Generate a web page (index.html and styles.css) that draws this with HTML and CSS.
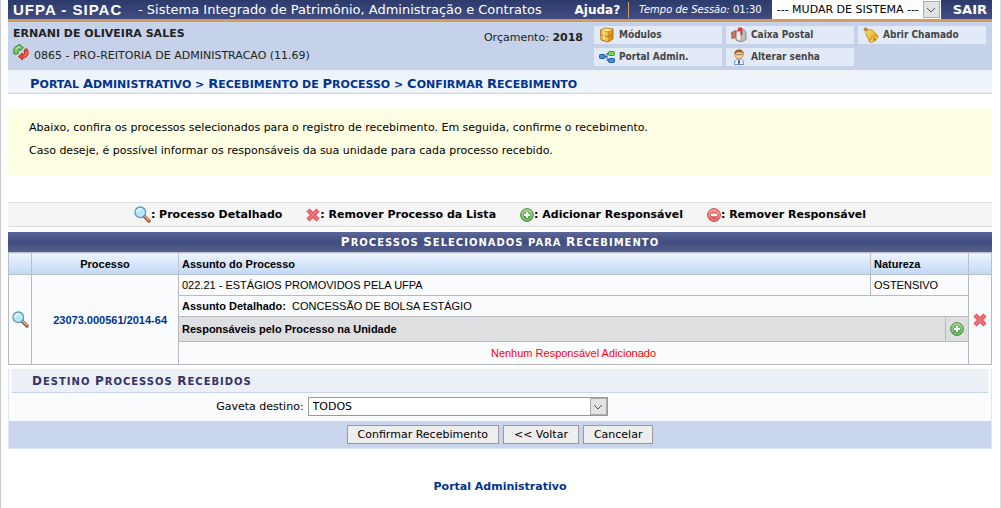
FILE: index.html
```
<!DOCTYPE html>
<html lang="pt-BR">
<head>
<meta charset="utf-8">
<title>UFPA - SIPAC</title>
<link rel="stylesheet" href="styles.css">
</head>
<body>
<svg class="sprite" aria-hidden="true">
  <defs>
    <linearGradient id="g-green" x1="0" y1="0" x2="0" y2="1"><stop offset="0" stop-color="#9bcf88"/><stop offset="1" stop-color="#3f9136"/></linearGradient>
    <linearGradient id="g-red" x1="0" y1="0" x2="0" y2="1"><stop offset="0" stop-color="#f39b93"/><stop offset="1" stop-color="#cf3c3a"/></linearGradient>
    <linearGradient id="g-gold" x1="0" y1="0" x2="1" y2="1"><stop offset="0" stop-color="#ffe572"/><stop offset="1" stop-color="#d48a10"/></linearGradient>
  </defs>
  <symbol id="search" viewBox="0 0 17 17">
    <path d="M10 10l5 5" stroke="#8f5a35" stroke-width="3.4" stroke-linecap="round"/>
    <path d="M10.800 10.300l4 4" stroke="#e8b184" stroke-width="1.500" stroke-linecap="round"/>
    <circle cx="6.300" cy="6.300" r="5.300" fill="#b9e9f6" stroke="#6397bd" stroke-width="1.300"/>
    <path d="M3 6a3.500 3.500 0 0 1 4-3" stroke="#f2fdff" stroke-width="1.500" fill="none"/>
  </symbol>
  <symbol id="cross" viewBox="0 0 14 14">
    <path d="M2 2l10 10M12 2L2 12" stroke="#dd4650" stroke-width="4.400"/>
    <path d="M2.200 2.200l9.600 9.600M11.800 2.200l-9.600 9.600" stroke="#f4707a" stroke-width="2.600"/>
  </symbol>
  <symbol id="plus" viewBox="0 0 14 14">
    <circle cx="7" cy="7" r="6.400" fill="url(#g-green)" stroke="#4b9440"/>
    <circle cx="7" cy="7" r="5" fill="none" stroke="#b8dfad" stroke-width=".8"/>
    <path d="M7 4v6M4 7h6" stroke="#fff" stroke-width="2"/>
  </symbol>
  <symbol id="minus" viewBox="0 0 14 14">
    <circle cx="7" cy="7" r="6.400" fill="url(#g-red)" stroke="#d04a46"/>
    <circle cx="7" cy="7" r="5" fill="none" stroke="#f6b8b2" stroke-width=".8"/>
    <path d="M4 7h6" stroke="#fff" stroke-width="2.400"/>
  </symbol>
  <symbol id="swap" viewBox="0 0 16 16">
    <path d="M.8 9.500C0 5 2 1.500 6 1.500V0l4.500 3.500L7 7V5C5 5 4.500 7 5.500 9L3 10.500z" fill="#7cc764" stroke="#32802c" stroke-width=".9"/>
    <path d="M13.500 4.500c3.500 4 1.500 9-4 9.800V16L5.500 12.500 9.500 9v2c2-.5 2.500-2.500 1.500-5z" fill="#ee4a30" stroke="#b52c1c" stroke-width=".9"/>
    <path d="M3 5.500C3.500 4 5 3 7 3" stroke="#d6f3c8" fill="none"/>
    <path d="M14 8c0 2-1 3.500-3 4.300" stroke="#fba08c" fill="none"/>
  </symbol>
  <symbol id="box" viewBox="0 0 16 16">
    <path d="M1.500 3l5-2 7.500 1v10l-5 3-7-2z" fill="#d9961c" stroke="#9c6409" stroke-width=".8"/>
    <path d="M2 3.200L6.500 1.500l7 .8L9 4.500z" fill="#ffe487"/>
    <path d="M2 4l6.800 1.200v9.200L2.500 12.500z" fill="#f5c548"/>
    <path d="M2 8l7 1.500 5-2" stroke="#b97b12" fill="none"/>
    <path d="M5 4.500v8" stroke="#fff0a9" stroke-width="1.400" fill="none"/>
  </symbol>
  <symbol id="tree" viewBox="0 0 16 12">
    <path d="M5 5.500h3M10 2.500H8v7h2" stroke="#4a5560" fill="none"/>
    <rect x=".5" y="3.500" width="5.500" height="4" rx="1" fill="#3f8fe0" stroke="#1d5ba5"/>
    <rect x="9.500" y=".5" width="6" height="4" rx="1" fill="#6fd365" stroke="#37953a"/>
    <rect x="9.500" y="7.500" width="6" height="4" rx="1" fill="#3f8fe0" stroke="#1d5ba5"/>
  </symbol>
  <symbol id="mail" viewBox="0 0 16 16">
    <path d="M.5 5.500l4.500-2v7l-4 1z" fill="#c9795a" stroke="#975038" stroke-width=".8"/>
    <path d="M5 6.500C5 3 8 2 10 2c3 0 5 1.500 5 5v5.500L10 15l-5-2z" fill="#bfc0bd" stroke="#777872" stroke-width=".8"/>
    <path d="M5.300 7c0-4 4.700-4 4.700 0v7.500l-4.700-2z" fill="#eceae3" stroke="#92918c" stroke-width=".7"/>
    <path d="M10.500 8V1" stroke="#c61f20" stroke-width="1.500"/>
    <path d="M7 .5h4v3.500H7z" fill="#e73736"/>
  </symbol>
  <symbol id="user" viewBox="0 0 14 16">
    <path d="M2.500 15.500c0-4 1-5.500 4.500-5.500s4.500 1.500 4.500 5.500z" fill="#f4f7ff" stroke="#6985c3" stroke-width=".9"/>
    <circle cx="7" cy="5.500" r="4.200" fill="#ffd9a5" stroke="#b87932" stroke-width=".8"/>
    <path d="M2.500 5.500C2 2 4 .5 7 .5s5 1.500 4.500 5L10 3.500H5z" fill="#a3612a"/>
    <path d="M4 5.700h6" stroke="#8b6850" stroke-width="1"/>
    <path d="M7 10.500l1.200 1.500L7.500 15.500h-1L5.800 12z" fill="#3164cf"/>
  </symbol>
  <symbol id="bell" viewBox="0 0 16 16">
    <path d="M3.500 4.500L1.200 3c-.6-1.800 1.300-2.700 2.300-1.700l1.700 2z" fill="#dc9230" stroke="#9e5d12" stroke-width=".8"/>
    <path d="M3 4.500C5 2 9 2 11 4.500c1.300 1.500 2 3 4 4.500L6.500 15C6 11 2 9 3 4.500z" fill="url(#g-gold)" stroke="#bd830f" stroke-width=".8"/>
    <ellipse cx="10.800" cy="12" rx="5" ry="1.900" transform="rotate(-35 10.800 12)" fill="#ffd84a" stroke="#b87c10" stroke-width=".8"/>
    <circle cx="11.500" cy="12.500" r="1.400" fill="#bd7b12"/>
  </symbol>
  <symbol id="chev" viewBox="0 0 10 6"><path d="M1 1l4 4 4-4" fill="none" stroke="#555"/></symbol>
</svg>
<div class="page">
  <header>
    <div class="topbar">
      <h1 class="brand">UFPA - SIPAC</h1>
      <span class="system">- Sistema Integrado de Patrimônio, Administração e Contratos</span>
      <a class="help" href="#">Ajuda?</a>
      <span class="session"><em>Tempo de Sessão:</em> 01:30</span>
      <span class="picker system-picker">
        <select aria-label="Mudar de sistema"><option>--- MUDAR DE SISTEMA ---</option></select>
        <span class="arrow"><svg><use href="#chev"/></svg></span>
      </span>
      <a class="exit" href="#">SAIR</a>
    </div>
    <div class="userbar">
      <div class="who">
        <strong>ERNANI DE OLIVEIRA SALES</strong>
        <span class="unit"><svg class="icon"><use href="#swap"/></svg>0865 - PRO-REITORIA DE ADMINISTRACAO (11.69)</span>
      </div>
      <p class="budget">Orçamento: <strong>2018</strong></p>
      <nav class="shortcuts">
        <a href="#"><svg class="icon"><use href="#box"/></svg>Módulos</a>
        <a href="#"><svg class="icon"><use href="#mail"/></svg>Caixa Postal</a>
        <a href="#"><svg class="icon"><use href="#bell"/></svg>Abrir Chamado</a>
        <a href="#"><svg class="icon"><use href="#tree"/></svg>Portal Admin.</a>
        <a href="#"><svg class="icon"><use href="#user"/></svg>Alterar senha</a>
      </nav>
    </div>
  </header>
  <main>
    <h2 class="crumbs caps"><a href="#"><span>Portal</span> <span>Administrativo</span></a> &gt; <span>Recebimento</span> de <span>Processo</span> &gt; <span>Confirmar</span> <span>Recebimento</span></h2>
    <div class="info">
      <p>Abaixo, confira os processos selecionados para o registro de recebimento. Em seguida, confirme o recebimento.</p>
      <p>Caso deseje, é possível informar os responsáveis da sua unidade para cada processo recebido.</p>
    </div>
    <div class="legend">
      <span><svg class="icon lens"><use href="#search"/></svg>: Processo Detalhado</span>
      <span><svg class="icon"><use href="#cross"/></svg>: Remover Processo da Lista</span>
      <span><svg class="icon"><use href="#plus"/></svg>: Adicionar Responsável</span>
      <span><svg class="icon"><use href="#minus"/></svg>: Remover Responsável</span>
    </div>
    <table class="list">
      <caption class="caps"><span>Processos</span> <span>Selecionados</span> para <span>Recebimento</span></caption>
      <colgroup><col class="c-icon"><col class="c-process"><col><col class="c-nature"><col class="c-icon"><col class="c-icon"></colgroup>
      <thead>
        <tr><th></th><th class="center">Processo</th><th>Assunto do Processo</th><th colspan="2">Natureza</th><th></th></tr>
      </thead>
      <tbody>
        <tr>
          <td rowspan="4" class="action"><button type="button" aria-label="Processo Detalhado"><svg class="icon lens"><use href="#search"/></svg></button></td>
          <td rowspan="4" class="number"><a href="#">23073.000561/2014-64</a></td>
          <td>022.21 - ESTÁGIOS PROMOVIDOS PELA UFPA</td>
          <td colspan="2">OSTENSIVO</td>
          <td rowspan="4" class="action"><button type="button" aria-label="Remover Processo da Lista"><svg class="icon"><use href="#cross"/></svg></button></td>
        </tr>
        <tr><td colspan="3"><strong>Assunto Detalhado:</strong>&nbsp; CONCESSÃO DE BOLSA ESTÁGIO</td></tr>
        <tr class="people"><td colspan="2"><strong>Responsáveis pelo Processo na Unidade</strong></td>
          <td class="action"><button type="button" aria-label="Adicionar Responsável"><svg class="icon"><use href="#plus"/></svg></button></td></tr>
        <tr class="none"><td colspan="3">Nenhum Responsável Adicionado</td></tr>
      </tbody>
    </table>
    <form class="target">
      <h3 class="caps"><span>Destino</span> <span>Processos</span> <span>Recebidos</span></h3>
      <div class="field">
        <label for="drawer">Gaveta destino:</label>
        <span class="picker drawer-picker">
          <select id="drawer"><option>TODOS</option></select>
          <span class="arrow"><svg><use href="#chev"/></svg></span>
        </span>
      </div>
      <div class="buttons">
        <button type="button">Confirmar Recebimento</button>
        <button type="button">&lt;&lt; Voltar</button>
        <button type="button">Cancelar</button>
      </div>
    </form>
    <p class="back"><a href="#">Portal Administrativo</a></p>
  </main>
</div>
</body>
</html>
```
FILE: styles.css
```
* { box-sizing: border-box; }
body, h1, h2, h3, p { margin: 0; }
body {
  font: 11px/16px Verdana, "DejaVu Sans", sans-serif;
  color: #000;
  background: #fff;
}
a { color: #003390; text-decoration: none; }
button, select { font: inherit; color: inherit; }
.sprite { position: absolute; width: 0; height: 0; }
.icon { width: 14px; height: 14px; flex: none; }
.lens { width: 17px; height: 17px; }

/* Capitals with a larger initial on each main word */
.caps { text-transform: uppercase; }
.caps span { display: inline-block; }
.caps span::first-letter { font-size: 12px; }
.crumbs span::first-letter { font-size: 13px; }

.page {
  min-height: 100vh;
  padding: 0 8px 0 7px;
  border-left: 1px solid #ccc;
  border-right: 1px solid #ddd;
}

.topbar {
  display: flex;
  align-items: center;
  height: 22px;
  padding: 0 5px;
  color: #fff;
  background: linear-gradient(#2d3a6c, #414d80);
  border-bottom: 3px solid #d89c58;
  white-space: nowrap;
}
.topbar a { color: #fff; font-weight: bold; font-size: 12px; }
.brand {
  width: 125px;
  font: bold 15px/18px "Liberation Sans", Arial, sans-serif;
  letter-spacing: 1px;
}
.system { font-size: 13px; }
.help { margin-left: auto; padding-right: 8px; border-right: 1px solid #d89c58; }
.session { padding: 0 10px; font-size: 10px; }
.topbar .exit { margin-left: 12px; font-size: 13px; }

.picker { position: relative; display: block; }
.picker select {
  display: block;
  width: 100%;
  height: 19px;
  padding: 0 18px 0 4px;
  appearance: none;
  color: #000;
  background: #fff;
  border: 1px solid #999;
  border-radius: 0;
}
.arrow {
  position: absolute;
  top: 1px;
  right: 1px;
  bottom: 1px;
  display: grid;
  place-items: center;
  width: 17px;
  background: #e3e3e3;
  border: 1px solid #aaa;
  pointer-events: none;
}
.arrow svg { width: 10px; height: 6px; }
.system-picker { width: 169px; }
.system-picker select { border-color: #fff; }
.drawer-picker { width: 300px; }

.userbar {
  display: flex;
  height: 48px;
  padding: 4px 5px 0;
  color: #222;
  background: #c5d2ea;
}
.who { display: grid; align-content: start; gap: 2px; }
.unit { display: flex; gap: 5px; line-height: 24px; }
.unit .icon { width: 16px; height: 16px; }
.budget { margin: 4px 11px 0 auto; }
.shortcuts {
  display: grid;
  grid-template-columns: 128px 128px 128px;
  grid-auto-rows: 18px;
  gap: 4px;
  margin-right: 1px;
}
.shortcuts a {
  display: flex;
  align-items: center;
  gap: 4px;
  padding-left: 5px;
  color: #444;
  background: #e3eaf7;
  font: bold 10px/16px "DejaVu Sans Condensed", Tahoma, sans-serif;
}
.shortcuts .icon { width: 16px; height: 16px; }

.crumbs {
  padding: 0 22px;
  height: 24px;
  color: #003390;
  background: #eff3fa;
  border-bottom: 1px solid #c8d5ec;
  font-size: 11px;
  line-height: 28px;
}
.info {
  margin: 16px 0 26px;
  padding: 6px 21px 14px;
  background: #ffffe4;
  line-height: 23px;
}
.legend {
  display: flex;
  justify-content: center;
  gap: 24px;
  height: 25px;
  background: #f5f5f5;
  border: solid #dedfe3;
  border-width: 1px 0;
  font-weight: bold;
}
.legend span { display: flex; align-items: center; }

.list {
  width: 100%;
  margin-top: 5px;
  table-layout: fixed;
  border-collapse: collapse;
  background: #f9fbfd;
  font: 11px/14px "Liberation Sans", Arial, sans-serif;
}
.list caption {
  height: 20px;
  color: #fff;
  background: linear-gradient(#5b6799, #414c7f 50%, #55608f);
  font: bold 10px/20px Verdana, "DejaVu Sans", sans-serif;
  letter-spacing: 1px;
}
.c-icon { width: 23px; }
.c-process { width: 147px; }
.c-nature { width: 75px; }
.list th {
  height: 22px;
  padding: 0 3px;
  text-align: left;
  background: linear-gradient(#eef4ff, #c2d8f7);
  border: 1px solid #bbc0ca;
}
.list .center { text-align: center; }
.list td { height: 21px; padding: 0 3px; border: 1px solid #b8b9be; }
.list .number { text-align: right; padding-right: 11px; font-weight: bold; }
.list .action { padding: 0; }
.action button { display: grid; place-items: center; width: 100%; padding: 0; border: 0; background: none; }
.list .people td { height: 25px; background: #dedfe1; }
.list .none td { height: 23px; color: #f00; text-align: center; }

.target { background: #fafbfd; border: 1px solid #e0e7f2; border-top: 0; }
.target h3 {
  margin: 4px 3px 0;
  padding-left: 20px;
  height: 24px;
  color: #333366;
  background: #ebf0f7;
  border-bottom: 1px solid #c8d5ec;
  font-size: 10px;
  line-height: 24px;
  letter-spacing: 1px;
}
.field {
  display: grid;
  grid-template-columns: 30% 1fr;
  align-items: center;
  gap: 4px;
  padding: 4px 0 5px;
}
.field label { text-align: right; }
.buttons { display: flex; justify-content: center; gap: 4px; padding: 4px; background: #c8d5ec; }
.buttons button {
  height: 19px;
  padding: 0 10px;
  background: #eee;
  border: 1px solid #999;
}
.back { margin-top: 30px; text-align: center; font-weight: bold; }
```
